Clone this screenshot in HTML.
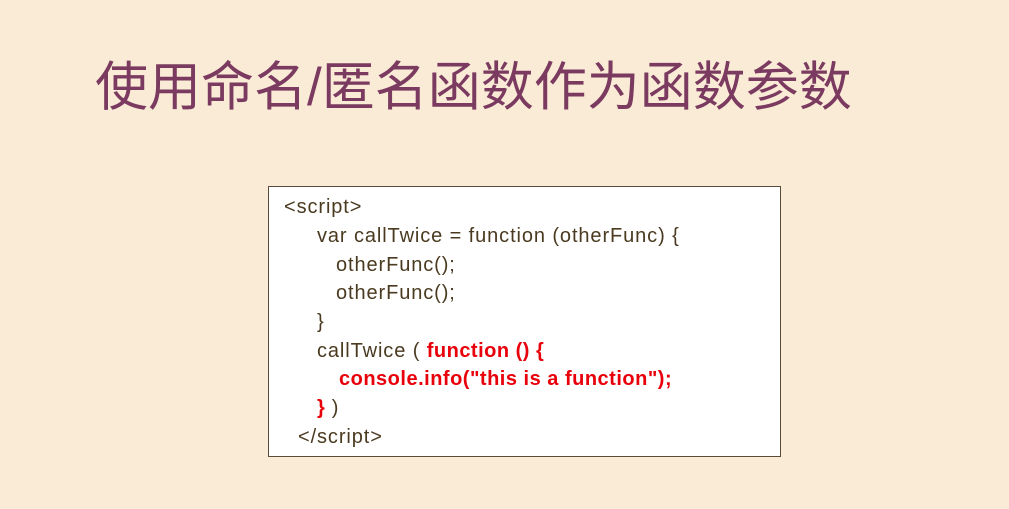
<!DOCTYPE html>
<html><head><meta charset="utf-8"><style>
html,body{margin:0;padding:0}
body{width:1009px;height:509px;background:#faebd7;position:relative;overflow:hidden;font-family:"Liberation Sans","Noto Sans CJK SC",sans-serif}
.t{position:absolute;left:95px;top:50px;font-size:53px;color:#7b3a5f;white-space:nowrap;line-height:76px}
.box{position:absolute;left:268px;top:186px;width:511px;height:269px;background:#fff;border:1px solid #5a4a3a}
.l{position:absolute;font-size:20px;letter-spacing:0.9px;color:#4a3a20;white-space:nowrap;line-height:24px}
.r{color:#e8000b;font-weight:bold;letter-spacing:0.5px}
</style></head><body>
<div class="t">使用命名/匿名函数作为函数参数</div>
<div class="box"></div>
<div class="l" style="left:284px;top:195px">&lt;script&gt;</div>
<div class="l" style="left:317px;top:224px">var callTwice = function (otherFunc) {</div>
<div class="l" style="left:336px;top:253px">otherFunc();</div>
<div class="l" style="left:336px;top:281px">otherFunc();</div>
<div class="l" style="left:317px;top:310px">}</div>
<div class="l" style="left:317px;top:339px">callTwice ( <span class="r">function () {</span></div>
<div class="l r" style="left:339px;top:367px">console.info("this is a function");</div>
<div class="l" style="left:317px;top:396px"><span class="r">}</span> )</div>
<div class="l" style="left:298px;top:425px">&lt;/script&gt;</div>
</body></html>
